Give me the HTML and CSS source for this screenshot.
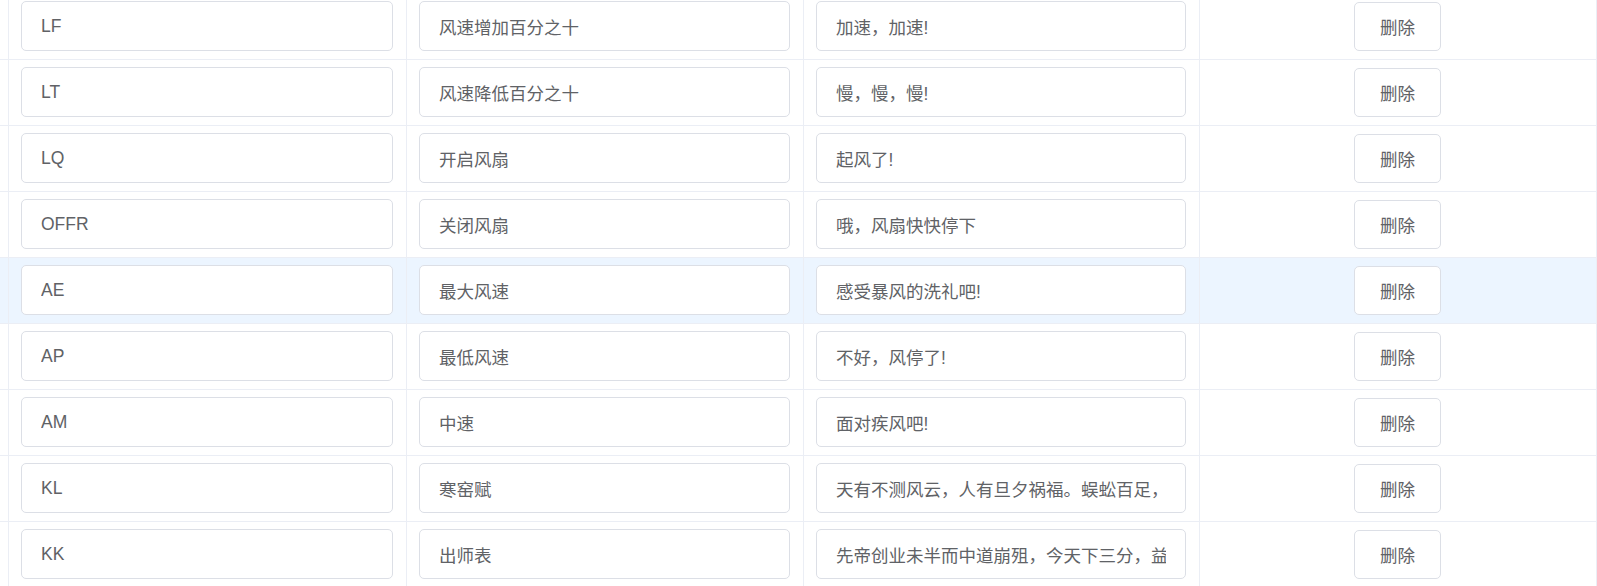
FILE: index.html
```html
<!DOCTYPE html>
<html lang="zh-CN">

<head>
    <meta charset="UTF-8">
    <meta name="viewport" content="width=device-width, initial-scale=1.0">
    <title>指令列表</title>
    <link rel="stylesheet" href="styles.css">
</head>

<body>
    <div class="table">
        <div class="row">
            <div class="cell edge"></div>
            <div class="cell"><input class="field" type="text" value="LF"></div>
            <div class="cell"><input class="field" type="text" value="风速增加百分之十"></div>
            <div class="cell"><input class="field" type="text" value="加速，加速!"></div>
            <div class="cell action"><button class="del">删除</button></div>
        </div>
        <div class="row">
            <div class="cell edge"></div>
            <div class="cell"><input class="field" type="text" value="LT"></div>
            <div class="cell"><input class="field" type="text" value="风速降低百分之十"></div>
            <div class="cell"><input class="field" type="text" value="慢，慢，慢!"></div>
            <div class="cell action"><button class="del">删除</button></div>
        </div>
        <div class="row">
            <div class="cell edge"></div>
            <div class="cell"><input class="field" type="text" value="LQ"></div>
            <div class="cell"><input class="field" type="text" value="开启风扇"></div>
            <div class="cell"><input class="field" type="text" value="起风了!"></div>
            <div class="cell action"><button class="del">删除</button></div>
        </div>
        <div class="row">
            <div class="cell edge"></div>
            <div class="cell"><input class="field" type="text" value="OFFR"></div>
            <div class="cell"><input class="field" type="text" value="关闭风扇"></div>
            <div class="cell"><input class="field" type="text" value="哦，风扇快快停下"></div>
            <div class="cell action"><button class="del">删除</button></div>
        </div>
        <div class="row current">
            <div class="cell edge"></div>
            <div class="cell"><input class="field" type="text" value="AE"></div>
            <div class="cell"><input class="field" type="text" value="最大风速"></div>
            <div class="cell"><input class="field" type="text" value="感受暴风的洗礼吧!"></div>
            <div class="cell action"><button class="del">删除</button></div>
        </div>
        <div class="row">
            <div class="cell edge"></div>
            <div class="cell"><input class="field" type="text" value="AP"></div>
            <div class="cell"><input class="field" type="text" value="最低风速"></div>
            <div class="cell"><input class="field" type="text" value="不好，风停了!"></div>
            <div class="cell action"><button class="del">删除</button></div>
        </div>
        <div class="row">
            <div class="cell edge"></div>
            <div class="cell"><input class="field" type="text" value="AM"></div>
            <div class="cell"><input class="field" type="text" value="中速"></div>
            <div class="cell"><input class="field" type="text" value="面对疾风吧!"></div>
            <div class="cell action"><button class="del">删除</button></div>
        </div>
        <div class="row">
            <div class="cell edge"></div>
            <div class="cell"><input class="field" type="text" value="KL"></div>
            <div class="cell"><input class="field" type="text" value="寒窑赋"></div>
            <div class="cell"><input class="field" type="text" value="天有不测风云，人有旦夕祸福。蜈蚣百足，行不及蛇；雄鸡两翼，飞不过鸦。"></div>
            <div class="cell action"><button class="del">删除</button></div>
        </div>
        <div class="row">
            <div class="cell edge"></div>
            <div class="cell"><input class="field" type="text" value="KK"></div>
            <div class="cell"><input class="field" type="text" value="出师表"></div>
            <div class="cell"><input class="field" type="text" value="先帝创业未半而中道崩殂，今天下三分，益州疲弊，此诚危急存亡之秋也。"></div>
            <div class="cell action"><button class="del">删除</button></div>
        </div>
    </div>
</body>

</html>
```

FILE: styles.css
```css
body {
    margin: 0;
    background-color: #fff;
    font-family: "Liberation Sans", "Noto Sans CJK SC", sans-serif;
    overflow: hidden;
}

.table {
    margin-top: -6px;
}

.row {
    display: grid;
    grid-template-columns: 9px 398px 397px 396px 397px;
    border-bottom: 1px solid #ebeef5;
}

.row.current {
    background-color: #ecf5ff;
}

.cell {
    display: flex;
    align-items: center;
    height: 65px;
    padding: 0 13px 0 12px;
    border-right: 1px solid #ebeef5;
    box-sizing: border-box;
}

.cell.edge {
    padding: 0;
}

.cell.action {
    justify-content: center;
}

.field {
    width: 100%;
    height: 50px;
    margin-top: -1px;
    padding: 0 19px;
    box-sizing: border-box;
    border: 1px solid #dcdfe6;
    border-radius: 5px;
    background-color: #fff;
    color: #606266;
    font-family: "Liberation Sans", "Noto Sans CJK SC", sans-serif;
    font-size: 17.5px;
    outline: none;
}

.del {
    width: 87px;
    height: 49px;
    margin-top: -1px;
    padding: 0;
    border: 1px solid #dcdfe6;
    border-radius: 5px;
    background-color: #fff;
    color: #606266;
    font-family: "Liberation Sans", "Noto Sans CJK SC", sans-serif;
    font-size: 17.5px;
    cursor: pointer;
}
```
